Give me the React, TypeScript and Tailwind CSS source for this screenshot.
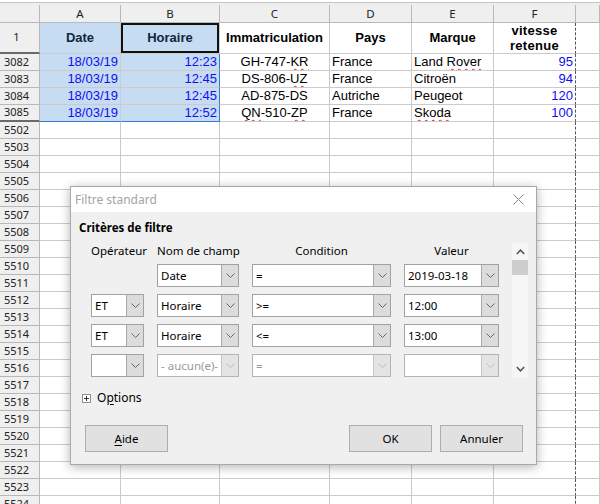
import React from "react";

const colW = ["w-[81px]", "w-[99px]", "w-[110px]", "w-[82px]", "w-[82px]", "w-[82px]", "w-[24px]"];
const letters = ["A", "B", "C", "D", "E", "F", ""];

const Wavy = ({ children }: { children: React.ReactNode }) => (
  <span className="underline decoration-wavy decoration-[#e02020] decoration-1 underline-offset-[2px]">{children}</span>
);

type DataRow = {
  n: string;
  a: string;
  b: string;
  c: React.ReactNode;
  d: string;
  e: React.ReactNode;
  f: string;
};

const data: DataRow[] = [
  { n: "3082", a: "18/03/19", b: "12:23", c: <span>GH-747-<Wavy>KR</Wavy></span>, d: "France", e: <span>Land <Wavy>Rover</Wavy></span>, f: "95" },
  { n: "3083", a: "18/03/19", b: "12:45", c: <span>DS-806-<Wavy>UZ</Wavy></span>, d: "France", e: <span>Citroën</span>, f: "94" },
  { n: "3084", a: "18/03/19", b: "12:45", c: <span>AD-875-DS</span>, d: "Autriche", e: <span>Peugeot</span>, f: "120" },
  { n: "3085", a: "18/03/19", b: "12:52", c: <span><Wavy>QN</Wavy>-510-<Wavy>ZP</Wavy></span>, d: "France", e: <span><Wavy>Skoda</Wavy></span>, f: "100" },
];

const empties = Array.from({ length: 23 }, (_, i) => String(5502 + i));

const rowHead =
  "w-[40px] shrink-0 bg-[#efefef] border-r border-b border-[#b8b8b8] text-[11px] text-center pr-[6px] font-['Noto_Sans',sans-serif] text-[#222] flex items-center justify-center";
const cellBase = "shrink-0 border-r border-b border-[#cbcbcb] overflow-hidden whitespace-nowrap flex items-center";

function Chevron({ color = "#606060" }: { color?: string }) {
  return (
    <svg width="9" height="5" viewBox="0 0 9 5">
      <polyline points="0.5,0.5 4.5,4.5 8.5,0.5" fill="none" stroke={color} strokeWidth="1" />
    </svg>
  );
}

function Combo({
  w,
  text,
  muted,
}: {
  w: string;
  text?: string;
  muted?: boolean;
}) {
  return (
    <div className={`${w} h-[23px] shrink-0 flex bg-white border ${muted ? "border-[#b4b4b4]" : "border-[#a2a2a2]"}`}>
      <div className={`flex-1 pl-[3px] flex items-center overflow-hidden whitespace-nowrap ${muted ? "text-[#9a9a9a]" : "text-black"}`}>
        {text}
      </div>
      <div
        className={`w-[17px] shrink-0 flex items-center justify-center border-l ${
          muted ? "bg-[#e4e4e4] border-[#c4c4c4]" : "bg-[#dcdcdc] border-[#a9a9a9]"
        }`}
      >
        <Chevron color={muted ? "#bdbdbd" : "#666"} />
      </div>
    </div>
  );
}

function CriteriaRow({
  op,
  field,
  cond,
  val,
  muted,
}: {
  op?: string;
  field?: string;
  cond?: string;
  val?: string;
  muted?: boolean;
}) {
  return (
    <div className="flex gap-[13px] h-[23px]">
      {op === undefined ? <div className="w-[53px] shrink-0" /> : <Combo w="w-[53px]" text={op} />}
      <Combo w="w-[82px]" text={field} muted={muted} />
      <Combo w="w-[139px]" text={cond} muted={muted} />
      <Combo w="w-[95px]" text={val} muted={muted} />
    </div>
  );
}

function Btn({ children, w }: { children: React.ReactNode; w: string }) {
  return (
    <div className={`${w} h-[27px] shrink-0 bg-[#e1e1e1] border border-[#adadad] flex items-center justify-center text-black`}>
      {children}
    </div>
  );
}

function Dialog() {
  return (
    <div className="absolute left-[70px] top-[186px] w-[467px] h-[279px] bg-[#f0f0f0] border border-[#a8a8a8] shadow-[0_2px_10px_rgba(0,0,0,0.3)] flex flex-col font-['Noto_Sans',sans-serif] text-[11.5px] text-black">
      <div className="h-[25px] bg-white flex items-center justify-between pl-[4px] pr-[12px]">
        <span className="text-[12px] text-[#a3a3a3]">Filtre standard</span>
        <svg width="11" height="11" viewBox="0 0 11 11">
          <line x1="0.5" y1="0.5" x2="10.5" y2="10.5" stroke="#888" strokeWidth="1" />
          <line x1="10.5" y1="0.5" x2="0.5" y2="10.5" stroke="#888" strokeWidth="1" />
        </svg>
      </div>
      <div className="flex flex-col pl-[8px]">
        <div className="mt-[8px] leading-[16px] font-bold">Critères de filtre</div>
        <div className="mt-[7px] flex">
          <div className="ml-[12px] flex flex-col">
            <div className="flex gap-[13px] h-[16px] leading-[16px]">
              <div className="w-[53px] shrink-0 whitespace-nowrap">Opérateur</div>
              <div className="w-[82px] shrink-0 whitespace-nowrap">Nom de champ</div>
              <div className="w-[139px] shrink-0 text-center">Condition</div>
              <div className="w-[95px] shrink-0 text-center">Valeur</div>
            </div>
            <div className="mt-[5px] flex flex-col gap-[7px]">
              <CriteriaRow field="Date" cond="=" val="2019-03-18" />
              <CriteriaRow op="ET" field="Horaire" cond=">=" val="12:00" />
              <CriteriaRow op="ET" field="Horaire" cond="<=" val="13:00" />
              <CriteriaRow op="" field="- aucun(e)-" cond="=" val="" muted />
            </div>
          </div>
          <div className="ml-[13px] w-[16px] h-[135px] bg-[#f6f6f6] flex flex-col items-center">
            <div className="h-[16px] flex items-center justify-center mt-[1px]">
              <svg width="9" height="6" viewBox="0 0 9 6">
                <polyline points="0.8,5 4.5,1.2 8.2,5" fill="none" stroke="#555" strokeWidth="1.6" />
              </svg>
            </div>
            <div className="w-[16px] h-[15px] bg-[#cdcdcd]" />
            <div className="flex-1" />
            <div className="h-[16px] flex items-center justify-center mb-[1px]">
              <svg width="9" height="6" viewBox="0 0 9 6">
                <polyline points="0.8,1 4.5,4.8 8.2,1" fill="none" stroke="#555" strokeWidth="1.6" />
              </svg>
            </div>
          </div>
        </div>
        <div className="mt-[12px] h-[16px] flex items-center pl-[3px]">
          <div className="w-[9px] h-[9px] border border-[#8f8f8f] bg-white flex items-center justify-center">
            <svg width="5" height="5" viewBox="0 0 5 5">
              <line x1="0" y1="2.5" x2="5" y2="2.5" stroke="#334" strokeWidth="1" />
              <line x1="2.5" y1="0" x2="2.5" y2="5" stroke="#334" strokeWidth="1" />
            </svg>
          </div>
          <span className="ml-[6px] text-[12px]">
            O<span className="underline underline-offset-2">p</span>tions
          </span>
        </div>
        <div className="mt-[19px] flex items-center">
          <div className="ml-[6px]">
            <Btn w="w-[83px]">
              <span>
                <span className="underline underline-offset-2">A</span>ide
              </span>
            </Btn>
          </div>
          <div className="flex-1" />
          <Btn w="w-[83px]">OK</Btn>
          <div className="w-[8px]" />
          <Btn w="w-[83px]">Annuler</Btn>
          <div className="w-[13px]" />
        </div>
      </div>
    </div>
  );
}

export default function App() {
  const selBg = "bg-[#c6dcf3] border-[#a9bdd2]";
  return (
    <div className="relative w-[600px] h-[504px] overflow-hidden bg-white font-['Liberation_Sans',Arial,sans-serif] text-[13px] text-black">
      {/* formula bar remnant */}
      <div className="h-[3px] bg-white border-b border-[#c4c4c4]" />
      <div className="h-[2px] bg-[#eeeeee]" />
      {/* column headers */}
      <div className="flex h-[18px]">
        <div className="w-[40px] shrink-0 bg-[#efefef] border-r border-b border-[#b8b8b8]" />
        {letters.map((l, i) => (
          <div
            key={i}
            className={`${colW[i]} shrink-0 bg-[#efefef] border-r border-b border-[#b8b8b8] flex items-center justify-center text-[11.5px] font-['Noto_Sans',sans-serif] text-[#222]`}
          >
            {l}
          </div>
        ))}
      </div>
      {/* row 1 */}
      <div className="flex h-[31px]">
        <div className={`${rowHead} border-b-2 border-b-[#6a6a6a]`}>1</div>
        <div className={`${cellBase} ${colW[0]} ${selBg} justify-center font-bold text-[#13253b]`}>Date</div>
        <div className={`${cellBase} ${colW[1]} ${selBg} justify-center font-bold text-[#13253b] shadow-[inset_0_0_0_2px_#111]`}>Horaire</div>
        <div className={`${cellBase} ${colW[2]} justify-center font-bold`}>Immatriculation</div>
        <div className={`${cellBase} ${colW[3]} justify-center font-bold`}>Pays</div>
        <div className={`${cellBase} ${colW[4]} justify-center font-bold`}>Marque</div>
        <div className={`${cellBase} ${colW[5]} justify-center font-bold text-center leading-[15px] whitespace-normal border-r-[#555] [border-right-style:dashed] tracking-[0.3px]`}>
          <span>
            vitesse
            <br />
            retenue
          </span>
        </div>
        <div className={`${cellBase} ${colW[6]}`} />
      </div>
      {/* data rows */}
      {data.map((r, idx) => {
        const last = idx === data.length - 1;
        return (
          <div key={r.n} className="flex h-[17px]">
            <div className={`${rowHead} ${last ? "border-b-2 border-b-[#6a6a6a]" : ""}`}>{r.n}</div>
            <div className={`${cellBase} ${colW[0]} ${selBg} justify-end pr-[2px] text-[#1010f0] ${last ? "border-b-[#2b7fd8]" : ""}`}>{r.a}</div>
            <div className={`${cellBase} ${colW[1]} ${selBg} justify-end pr-[2px] text-[#1010f0] border-r-[#2b7fd8] ${last ? "border-b-[#2b7fd8]" : ""}`}>{r.b}</div>
            <div className={`${cellBase} ${colW[2]} justify-center`}>{r.c}</div>
            <div className={`${cellBase} ${colW[3]} pl-[2px]`}>{r.d}</div>
            <div className={`${cellBase} ${colW[4]} pl-[2px]`}>{r.e}</div>
            <div className={`${cellBase} ${colW[5]} justify-end pr-[2px] text-[#1010f0] border-r-[#555] [border-right-style:dashed]`}>{r.f}</div>
            <div className={`${cellBase} ${colW[6]}`} />
          </div>
        );
      })}
      {/* empty rows */}
      {empties.map((n) => (
        <div key={n} className="flex h-[17px]">
          <div className={rowHead}>{n}</div>
          {colW.map((w, i) => (
            <div
              key={i}
              className={`${cellBase} ${w} ${i === 5 ? "border-r-[#555] [border-right-style:dashed]" : ""}`}
            />
          ))}
        </div>
      ))}
      <Dialog />
    </div>
  );
}
